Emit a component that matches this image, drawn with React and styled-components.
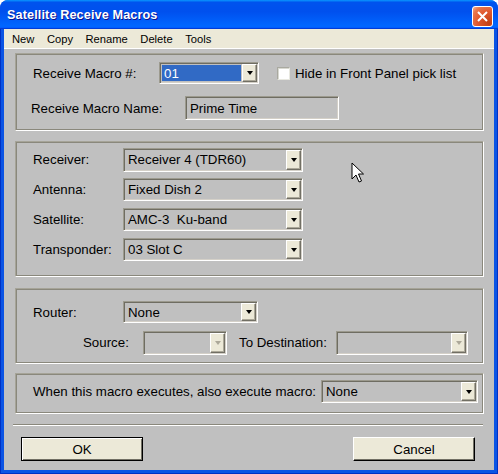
import React from 'react';
import styled, { createGlobalStyle } from 'styled-components';

const GlobalStyle = createGlobalStyle`
  * { box-sizing: border-box; }
  body {
    margin: 0;
    background: #fff;
    font-family: 'Liberation Sans', Arial, sans-serif;
  }
`;

function Select({ width, height, value, highlight, disabled }) {
  return (
    <SelectBox $w={width} $h={height}>
      <SelectValue $highlight={highlight}>{value}</SelectValue>
      <DropButton>
        <Arrow $disabled={disabled} />
      </DropButton>
    </SelectBox>
  );
}

function Cursor() {
  return (
    <CursorWrap>
      <svg width="14" height="22" viewBox="0 0 14 22">
        <path
          d="M1 1 L1 17 L5 13 L8 20 L10.5 19 L7.5 12 L12.5 12 Z"
          fill="#fff"
          stroke="#000"
          strokeWidth="1"
          strokeLinejoin="miter"
        />
      </svg>
    </CursorWrap>
  );
}

export default function App() {
  return (
    <>
      <GlobalStyle />
      <Window>
        <TitleBar>
          <Title>Satellite Receive Macros</Title>
          <CloseButton>
            <svg width="13" height="13" viewBox="0 0 13 13">
              <path d="M2 2 L11 11 M11 2 L2 11" stroke="#fff" strokeWidth="2" />
            </svg>
          </CloseButton>
        </TitleBar>
        <Frame>
          <MenuBar>
            <MenuItem>New</MenuItem>
            <MenuItem>Copy</MenuItem>
            <MenuItem>Rename</MenuItem>
            <MenuItem>Delete</MenuItem>
            <MenuItem>Tools</MenuItem>
          </MenuBar>
          <Content>
            <Group $h={78} $pt={8} $mt={4}>
              <Row $h={22}>
                <Label $w={126}>Receive Macro #:</Label>
                <Select width={100} height={22} value="01" highlight />
                <CheckRow>
                  <CheckBox />
                  <span>Hide in Front Panel pick list</span>
                </CheckRow>
              </Row>
              <Row $h={24} $mt={12}>
                <Label $w={154} $ml={-2}>Receive Macro Name:</Label>
                <TextField>Prime Time</TextField>
              </Row>
            </Group>

            <Group $h={136} $pt={6} $mt={10}>
              <Row $h={23}>
                <Label $w={90}>Receiver:</Label>
                <Select width={180} height={24} value="Receiver 4 (TDR60)" />
              </Row>
              <Row $h={23} $mt={7}>
                <Label $w={90}>Antenna:</Label>
                <Select width={180} height={23} value="Fixed Dish 2" />
              </Row>
              <Row $h={23} $mt={7}>
                <Label $w={90}>Satellite:</Label>
                <Select width={180} height={23} value="AMC-3  Ku-band" />
              </Row>
              <Row $h={23} $mt={7}>
                <Label $w={90}>Transponder:</Label>
                <Select width={180} height={23} value="03 Slot C" />
              </Row>
            </Group>

            <Group $h={76} $pt={12} $mt={11}>
              <Row $h={22}>
                <Label $w={90}>Router:</Label>
                <Select width={135} height={22} value="None" />
              </Row>
              <Row $h={25} $mt={7}>
                <Label $w={60} $ml={50}>Source:</Label>
                <Select width={84} height={24} value="" disabled />
                <Label $w={97} $ml={12}>To Destination:</Label>
                <Select width={132} height={24} value="" disabled />
              </Row>
            </Group>

            <Group $h={41} $pt={6} $mt={9}>
              <Row $h={23}>
                <Label $w={288}>When this macro executes, also execute macro:</Label>
                <Select width={157} height={23} value="None" />
              </Row>
            </Group>

            <Separator />

            <ButtonRow>
              <Button $default>OK</Button>
              <Button>Cancel</Button>
            </ButtonRow>
          </Content>
        </Frame>
        <Cursor />
      </Window>
    </>
  );
}

const Window = styled.div`
  position: relative;
  width: 498px;
  height: 474px;
  display: flex;
  flex-direction: column;
  border-radius: 8px 8px 0 0;
  overflow: hidden;
  background: #0a4fe0;
`;

const TitleBar = styled.div`
  height: 29px;
  flex: none;
  display: flex;
  align-items: center;
  justify-content: space-between;
  padding: 0 5px 0 7px;
  background: linear-gradient(
    180deg,
    #0997ff,
    #0053ee 8%,
    #0050ee 40%,
    #06f 88%,
    #06f 93%,
    #005bff 95%,
    #003dd7 96%,
    #003dd7
  );
`;

const Title = styled.div`
  color: #fff;
  font-weight: bold;
  font-size: 12.7px;
  letter-spacing: 0.1px;
  text-shadow: 1px 1px #0f1089;
  padding-top: 1px;
`;

const CloseButton = styled.div`
  width: 21px;
  height: 21px;
  margin-top: 3px;
  border: 1px solid #fff;
  border-radius: 3px;
  display: flex;
  align-items: center;
  justify-content: center;
  background: radial-gradient(
    circle at 85% 85%,
    #c24016 0,
    #e0582e 50%,
    #e8774c 80%,
    #f6b29a 100%
  );
`;

const Frame = styled.div`
  flex: 1;
  display: flex;
  flex-direction: column;
  padding: 0 4px 4px;
  background: #0b54e4;
  box-shadow: inset 1px 0 #0031c4, inset -1px 0 #0031c4, inset 0 -1px #0031c4;
`;

const MenuBar = styled.div`
  height: 20px;
  flex: none;
  display: flex;
  align-items: center;
  padding-left: 2px;
  background: #ece9d8;
  border-bottom: 1px solid #fff;
`;

const MenuItem = styled.span`
  font-size: 11.2px;
  color: #000;
  padding: 0 6px;
  margin-right: 0.5px;
`;

const Content = styled.div`
  flex: 1;
  display: flex;
  flex-direction: column;
  background: #c0c0c0;
  padding: 0 10px 0 11px;
  font-size: 13.3px;
  color: #000;
`;

const Group = styled.div`
  height: ${(p) => p.$h}px;
  margin-top: ${(p) => p.$mt}px;
  padding: ${(p) => p.$pt}px 8px 0 17px;
  display: flex;
  flex-direction: column;
  flex: none;
  border: 1px solid;
  border-color: #a6a498 #fff #fff #a6a498;
  box-shadow: inset 1px 1px #8a887c, inset -1px -1px #8a887c;
`;

const Row = styled.div`
  display: flex;
  align-items: center;
  height: ${(p) => p.$h}px;
  margin-top: ${(p) => p.$mt || 0}px;
`;

const Label = styled.span`
  width: ${(p) => p.$w}px;
  margin-left: ${(p) => p.$ml || 0}px;
  flex: none;
  white-space: nowrap;
`;

const SelectBox = styled.div`
  width: ${(p) => p.$w}px;
  height: ${(p) => p.$h}px;
  flex: none;
  display: flex;
  align-items: stretch;
  padding: 1px;
  border: 1px solid;
  border-color: #9c9a8e #fff #fff #9c9a8e;
  box-shadow: inset 1px 1px #6f6d62, inset -1px -1px #d4d0c8;
  background: #c0c0c0;
`;

const SelectValue = styled.span`
  flex: 1;
  display: flex;
  align-items: center;
  padding-left: 2px;
  margin: 1px;
  white-space: pre;
  background: ${(p) => (p.$highlight ? '#316ac5' : 'transparent')};
  color: ${(p) => (p.$highlight ? '#fff' : '#000')};
`;

const DropButton = styled.span`
  width: 15px;
  flex: none;
  display: flex;
  align-items: center;
  justify-content: center;
  background: #ece9d8;
  border: 1px solid;
  border-color: #fff #716f64 #716f64 #fff;
  box-shadow: inset -1px -1px #aca899;
`;

const Arrow = styled.span`
  width: 0;
  height: 0;
  border-left: 3.5px solid transparent;
  border-right: 3.5px solid transparent;
  border-top: 4px solid ${(p) => (p.$disabled ? '#aca899' : '#000')};
`;

const CheckRow = styled.label`
  display: flex;
  align-items: center;
  margin-left: 18px;
  gap: 5px;
  white-space: nowrap;
`;

const CheckBox = styled.span`
  width: 13px;
  height: 13px;
  flex: none;
  background: #fff;
  border: 1px solid;
  border-color: #a9a9a0 #e8e8e0 #e8e8e0 #a9a9a0;
  box-shadow: inset 1px 1px #d8d8d0;
`;

const TextField = styled.div`
  width: 154px;
  height: 24px;
  flex: none;
  display: flex;
  align-items: center;
  padding-left: 4px;
  border: 1px solid;
  border-color: #9c9a8e #fff #fff #9c9a8e;
  box-shadow: inset 1px 1px #6f6d62, inset -1px -1px #d4d0c8;
  background: #c0c0c0;
`;

const Separator = styled.div`
  height: 2px;
  flex: none;
  margin: 10px 1px 0 -2px;
  border-top: 1px solid #8a887c;
  border-bottom: 1px solid #fff;
`;

const ButtonRow = styled.div`
  display: flex;
  justify-content: space-between;
  margin: 11px 9px 0 6px;
`;

const Button = styled.div`
  width: 122px;
  height: 24px;
  display: flex;
  align-items: center;
  justify-content: center;
  background: #ece9d8;
  border: 1px solid;
  border-color: ${(p) => (p.$default ? '#000' : '#fff #000 #000 #fff')};
  box-shadow: ${(p) =>
    p.$default
      ? 'inset 1px 1px #fff, inset -1px -1px #716f64'
      : 'inset -1px -1px #716f64'};
`;

const CursorWrap = styled.div`
  position: absolute;
  left: 351px;
  top: 162px;
  line-height: 0;
`;
